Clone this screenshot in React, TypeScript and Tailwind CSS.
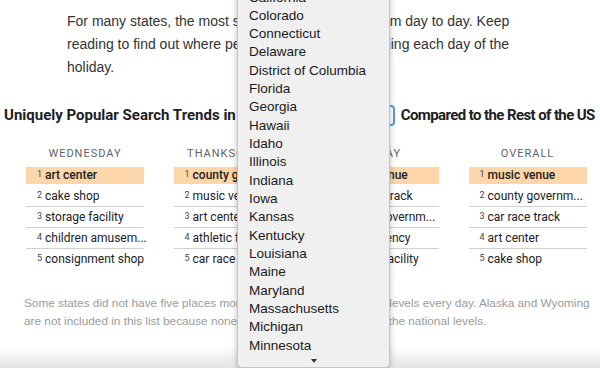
import React from "react";

const states = [
  "California",
  "Colorado",
  "Connecticut",
  "Delaware",
  "District of Columbia",
  "Florida",
  "Georgia",
  "Hawaii",
  "Idaho",
  "Illinois",
  "Indiana",
  "Iowa",
  "Kansas",
  "Kentucky",
  "Louisiana",
  "Maine",
  "Maryland",
  "Massachusetts",
  "Michigan",
  "Minnesota",
];

const columns: { title: string; items: string[] }[] = [
  {
    title: "WEDNESDAY",
    items: ["art center", "cake shop", "storage facility", "children amusem...", "consignment shop"],
  },
  {
    title: "THANKSGIVING",
    items: ["county governm...", "music venue", "art center", "athletic field", "car race track"],
  },
  {
    title: "FRIDAY",
    items: ["music venue", "car race track", "county governm...", "travel agency", "storage facility"],
  },
  {
    title: "OVERALL",
    items: ["music venue", "county governm...", "car race track", "art center", "cake shop"],
  },
];

function Column({ title, items }: { title: string; items: string[] }) {
  return (
    <div className="flex flex-col">
      <div className="h-[18px] text-center text-[11px] leading-[18px] tracking-[1px] text-[#5f6368] font-['Roboto',sans-serif]">
        {title}
      </div>
      <div className="mt-[4px] flex flex-col">
        {items.map((it, i) => (
          <div
            key={i}
            className={
              i === 0
                ? "flex h-[17px] items-center bg-[#fdd6aa] pl-[11px] mb-[2px] whitespace-nowrap"
                : i < 4
                ? "flex h-[21px] items-center border-b border-[#d0d0d0] pl-[11px] whitespace-nowrap"
                : "flex h-[21px] items-center pl-[11px] whitespace-nowrap"
            }
          >
            <span className="mr-[3px] text-[9px] text-[#444] font-['Roboto',sans-serif]">{i + 1}</span>
            <span
              className={
                i === 0
                  ? "text-[12px] font-medium text-[#202124] font-['Roboto',sans-serif]"
                  : "text-[12px] text-[#202124] font-['Roboto',sans-serif]"
              }
            >
              {it}
            </span>
          </div>
        ))}
      </div>
    </div>
  );
}

export default function App() {
  return (
    <div className="relative h-[368px] w-[600px] overflow-hidden bg-white">
      <p className="ml-[67px] w-[448px] pt-[10px] text-[14px] leading-[23px] text-[#333] font-['Liberation_Sans',Arial,sans-serif]">
        For many states, the most sought places differed from day to day. Keep reading to find out where people were actually traveling each day of the holiday.
      </p>

      <div className="flex items-center pl-[4px] pt-[25px] font-['Roboto',sans-serif] text-[15px] font-bold text-[#202124]">
        <span className="shrink-0 whitespace-nowrap">Uniquely Popular Search Trends in</span>
        <div className="ml-[4px] h-[21px] w-[155px] shrink-0 rounded-[4px] border-2 border-[#5b9dd9] bg-white" />
        <span className="ml-[6px] shrink-0 whitespace-nowrap tracking-[-0.6px]">Compared to the Rest of the US</span>
      </div>

      <div className="mt-[18px] grid grid-cols-[118px_118px_118px_118px] gap-x-[29.5px] pl-[26px]">
        {columns.map((c) => (
          <Column key={c.title} title={c.title} items={c.items} />
        ))}
      </div>

      <p className="ml-[24px] mt-[24px] w-[570px] text-[11.8px] leading-[18px] text-[#9b9b9b] font-['Liberation_Sans',Arial,sans-serif]">
        Some states did not have five places more popular than their national levels every day. Alaska and Wyoming are not included in this list because none of their searches surpassed the national levels.
      </p>

      <div className="pointer-events-none absolute bottom-0 left-0 h-[22px] w-[600px] bg-gradient-to-b from-transparent to-[#e4e4e4]" />

      <div className="absolute left-[237px] top-[-12.5px] w-[153px] rounded-b-[5px] border border-[#c4c4c4] bg-[#f0f0f0] shadow-[0_2px_6px_rgba(0,0,0,0.25)]">
        <div className="flex flex-col">
          {states.map((s) => (
            <div
              key={s}
              className="h-[18.33px] pl-[11px] text-[13.5px] leading-[18.33px] text-[#1a1a1a] font-['Liberation_Sans',Arial,sans-serif] whitespace-nowrap"
            >
              {s}
            </div>
          ))}
        </div>
        <div className="flex h-[12px] items-center justify-center">
          <div className="h-0 w-0 border-x-[3px] border-t-[4px] border-x-transparent border-t-[#333]" />
        </div>
      </div>
    </div>
  );
}
